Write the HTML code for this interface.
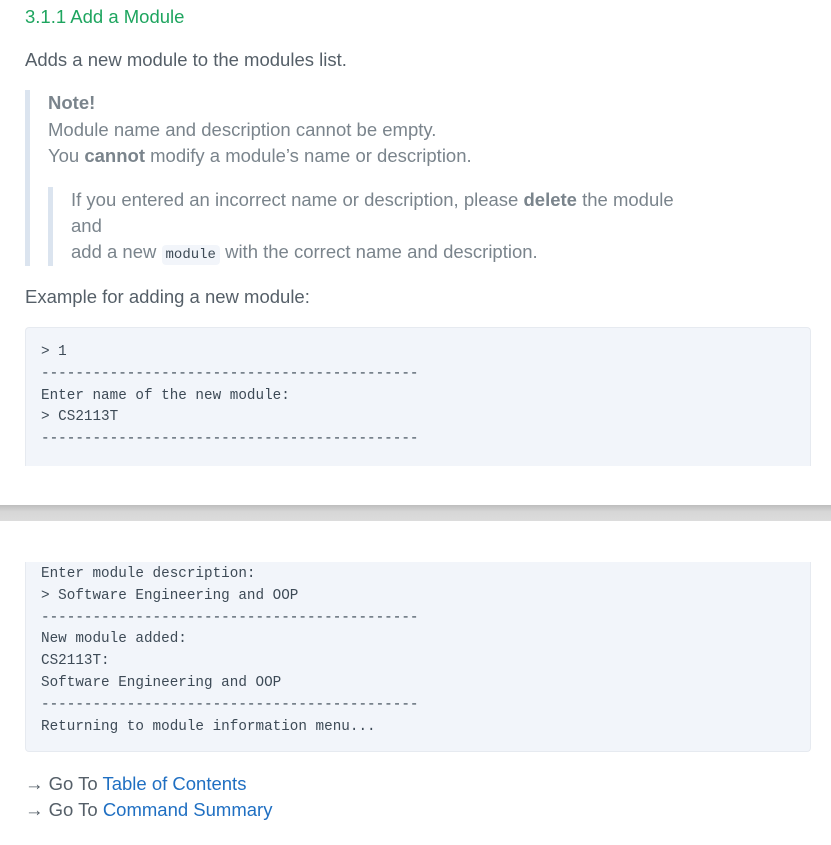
<!DOCTYPE html>
<html><head><meta charset="utf-8"><style>
body{margin:0;width:831px;height:845px;background:#fff;position:relative;overflow:hidden;font-family:"Liberation Sans",sans-serif;color:#555f68}
.t{position:absolute;white-space:nowrap;font-size:18.5px;line-height:22px}
.m{position:absolute;white-space:nowrap;font-family:"Liberation Mono",monospace;font-size:14.3px;line-height:22px;color:#3d4a56}
.g{color:#7a848c}
b{font-weight:bold}
a{color:#1f6fc2;text-decoration:none}
.code{position:absolute;left:25px;width:784px;background:#f2f5fa;border:1px solid #e6eaf0}
</style></head><body>
<div class="t" style="left:25px;top:6px;color:#1ea55f;font-size:18.5px">3.1.1 Add a Module</div>
<div class="t" style="left:25px;top:49px">Adds a new module to the modules list.</div>
<div style="position:absolute;left:25px;top:90px;width:5px;height:176px;background:#dbe4ef"></div>
<div class="t g" style="left:48px;top:92px"><b>Note!</b></div>
<div class="t g" style="left:48px;top:119px">Module name and description cannot be empty.</div>
<div class="t g" style="left:48px;top:145px">You <b>cannot</b> modify a module’s name or description.</div>
<div style="position:absolute;left:48px;top:187px;width:5px;height:79px;background:#dbe4ef"></div>
<div class="t g" style="left:71px;top:189px">If you entered an incorrect name or description, please <b>delete</b> the module</div>
<div class="t g" style="left:71px;top:215px">and</div>
<div class="t g" style="left:71px;top:241px">add a new <span style="font-family:'Liberation Mono',monospace;font-size:14px;background:#f2f5fa;padding:2px 4px;border-radius:4px;color:#3d4a56">module</span> with the correct name and description.</div>
<div class="t" style="left:25px;top:286px">Example for adding a new module:</div>
<div class="code" style="top:327px;height:138px;border-bottom:none;border-radius:4px 4px 0 0"></div>
<div class="m" style="left:41px;top:341px">&gt; 1</div>
<div class="m" style="left:41px;top:363px">--------------------------------------------</div>
<div class="m" style="left:41px;top:385px">Enter name of the new module:</div>
<div class="m" style="left:41px;top:406px">&gt; CS2113T</div>
<div class="m" style="left:41px;top:428px">--------------------------------------------</div>
<div style="position:absolute;left:0;top:505px;width:831px;height:16px;background:linear-gradient(#bdbdbd,#d6d6d6 40%,#dcdcdc)"></div>
<div class="code" style="top:562px;height:189px;border-top:none;border-radius:0 0 4px 4px"></div>
<div class="m" style="left:41px;top:563px">Enter module description:</div>
<div class="m" style="left:41px;top:585px">&gt; Software Engineering and OOP</div>
<div class="m" style="left:41px;top:607px">--------------------------------------------</div>
<div class="m" style="left:41px;top:628px">New module added:</div>
<div class="m" style="left:41px;top:650px">CS2113T:</div>
<div class="m" style="left:41px;top:672px">Software Engineering and OOP</div>
<div class="m" style="left:41px;top:694px">--------------------------------------------</div>
<div class="m" style="left:41px;top:716px">Returning to module information menu...</div>
<div class="t" style="left:25px;top:773px">→ Go To <a>Table of Contents</a></div>
<div class="t" style="left:25px;top:799px">→ Go To <a>Command Summary</a></div>
</body></html>
